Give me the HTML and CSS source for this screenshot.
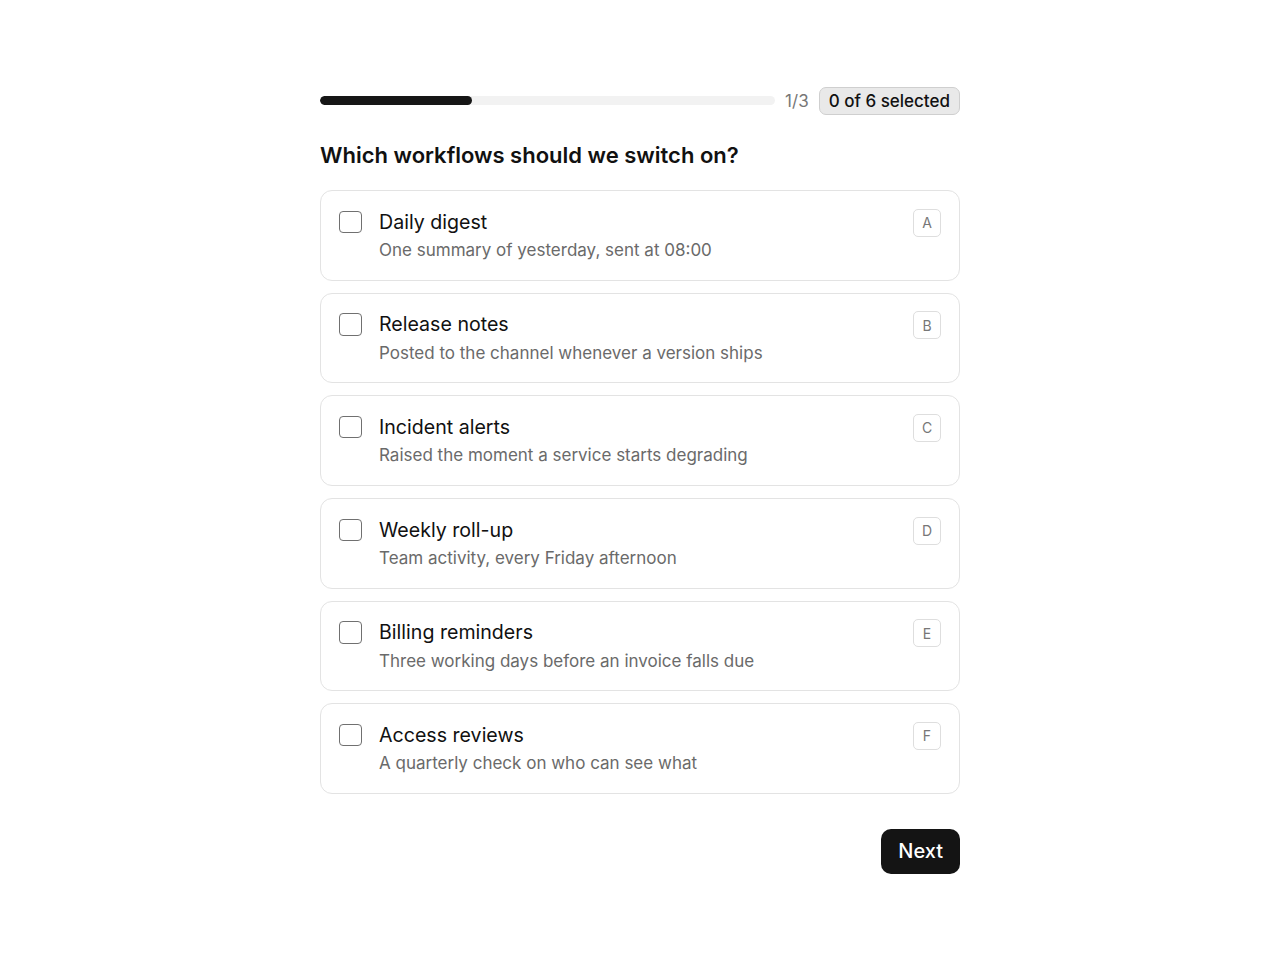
FILE: index.html
```html
<!DOCTYPE html>
<html>
<head>
  <link rel="stylesheet" href="styles.css">
</head>
<body>
  <div class="survey">
    <div class="progress-row">
      <div class="progress"><div class="progress-fill"></div></div>
      <span class="step">1/3</span>
      <span class="count">0 of 6 selected</span>
    </div>

    <h1 class="question">Which workflows should we switch on?</h1>

    <div class="options">
      <label class="option">
        <span class="box"></span>
        <span class="text">
          <span class="title">Daily digest</span>
          <span class="desc">One summary of yesterday, sent at 08:00</span>
        </span>
        <span class="key">A</span>
      </label>
      <label class="option">
        <span class="box"></span>
        <span class="text">
          <span class="title">Release notes</span>
          <span class="desc">Posted to the channel whenever a version ships</span>
        </span>
        <span class="key">B</span>
      </label>
      <label class="option">
        <span class="box"></span>
        <span class="text">
          <span class="title">Incident alerts</span>
          <span class="desc">Raised the moment a service starts degrading</span>
        </span>
        <span class="key">C</span>
      </label>
      <label class="option">
        <span class="box"></span>
        <span class="text">
          <span class="title">Weekly roll-up</span>
          <span class="desc">Team activity, every Friday afternoon</span>
        </span>
        <span class="key">D</span>
      </label>
      <label class="option">
        <span class="box"></span>
        <span class="text">
          <span class="title">Billing reminders</span>
          <span class="desc">Three working days before an invoice falls due</span>
        </span>
        <span class="key">E</span>
      </label>
      <label class="option">
        <span class="box"></span>
        <span class="text">
          <span class="title">Access reviews</span>
          <span class="desc">A quarterly check on who can see what</span>
        </span>
        <span class="key">F</span>
      </label>
    </div>

    <div class="actions">
      <button class="next">Next</button>
    </div>
  </div>
</body>
</html>
```

FILE: styles.css
```css
body {
  margin: 0;
  background: #fff;
  color: #111;
  font-family: 'Inter', 'Noto Sans', sans-serif;
}

.survey {
  width: 640px;
  margin: 0 auto;
  padding-top: 86px;
}

.progress-row {
  display: flex;
  align-items: center;
  gap: 10px;
  height: 29px;
}

.progress {
  flex: 1;
  height: 9px;
  background: #f2f2f2;
  border-radius: 5px;
  overflow: hidden;
}

.progress-fill {
  width: 33.3%;
  height: 100%;
  background: #161616;
  border-radius: 5px;
}

.step {
  font-size: 17px;
  color: #777;
}

.count {
  font-size: 17px;
  font-weight: 500;
  color: #111;
  background: #e9e9e9;
  border: 1px solid #cfcfcf;
  border-radius: 7px;
  padding: 3px 9px;
  line-height: 20px;
}

.question {
  font-size: 22px;
  font-weight: 600;
  margin: 26px 0 21px;
  line-height: 28px;
}

.options {
  display: flex;
  flex-direction: column;
  gap: 12.2px;
}

.option {
  display: flex;
  align-items: flex-start;
  border: 1.5px solid #e3e3e3;
  border-radius: 12px;
  padding: 17.5px 18px;
  cursor: pointer;
}

.box {
  width: 20.5px;
  height: 20.5px;
  border: 1.5px solid #707070;
  border-radius: 4px;
  margin-top: 2px;
  flex-shrink: 0;
}

.text {
  flex: 1;
  display: flex;
  flex-direction: column;
  gap: 2.5px;
  margin-left: 17.5px;
}

.title {
  font-size: 19.6px;
  line-height: 27px;
  color: #111;
}

.desc {
  font-size: 17px;
  line-height: 24px;
  color: #6a6a6a;
}

.key {
  width: 26px;
  height: 26px;
  border: 1px solid #dedede;
  border-radius: 5px;
  display: flex;
  align-items: center;
  justify-content: center;
  font-size: 14px;
  color: #777;
}

.actions {
  display: flex;
  justify-content: flex-end;
  margin-top: 35px;
}

.next {
  background: #141414;
  color: #fff;
  border: none;
  border-radius: 10px;
  font-family: inherit;
  font-size: 20px;
  font-weight: 500;
  height: 45px;
  padding: 0 17px;
  cursor: pointer;
}
```
